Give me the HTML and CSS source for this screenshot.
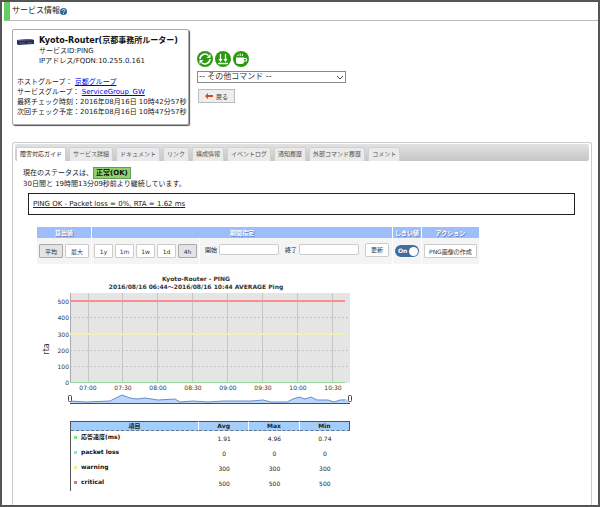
FILE: index.html
```
<!DOCTYPE html>
<html lang="ja">
<head>
    <meta charset="UTF-8">
    <meta name="viewport" content="width=device-width, initial-scale=1.0">
    <title>サービス情報</title>
    <link rel="stylesheet" href="styles.css">
</head>
<body>
    <header class="page-header">
        <h1>サービス情報</h1>
        <svg class="help" viewBox="0 0 16 16">
            <circle cx="8" cy="8" r="8" fill="#2a6496"/>
            <path d="M5 6c0-4 6-4 6-.5C11 8 8 7.500 8 10M8 11.500v2" fill="none" stroke="#fff" stroke-width="2"/>
        </svg>
    </header>

    <section class="top">
        <div class="card">
            <div class="host">
                <svg class="router" viewBox="0 0 17 8">
                    <path d="M0 2l13-1 4 1v4l-16 1-1-1z" fill="#2b2d52"/>
                    <path d="M0 2l13-1 4 1-16 1z" fill="#62658a"/>
                    <path d="M2 5h6M10 5h5" stroke="#565a8c" stroke-width="1"/>
                </svg>
                <div>
                    <h2>Kyoto-Router(京都事務所ルーター)</h2>
                    <p>サービスID:PING</p>
                    <p>IPアドレス/FQDN:10.255.0.161</p>
                </div>
            </div>
            <p>ホストグループ： <a href="#">京都グループ</a></p>
            <p>サービスグループ： <a href="#">ServiceGroup_GW</a></p>
            <p>最終チェック時刻：2016年08月16日 10時42分57秒</p>
            <p>次回チェック予定：2016年08月16日 10時47分57秒</p>
        </div>

        <div class="commands">
            <div class="icons">
                <button type="button" class="icon-btn" aria-label="再チェック">
                    <svg viewBox="0 0 16 16">
                        <circle cx="8" cy="8" r="8" fill="#2c9a10"/>
                        <path d="M3 8a5 5 0 0 1 8.500-3.500M13 8a5 5 0 0 1-8.500 3.500" fill="none" stroke="#fff" stroke-width="1.600"/>
                        <path d="M13.500 3v4h-4zM2.500 13V9h4z" fill="#fff"/>
                    </svg>
                </button>
                <button type="button" class="icon-btn" aria-label="ダウンタイム">
                    <svg viewBox="0 0 16 16">
                        <circle cx="8" cy="8" r="8" fill="#2c9a10"/>
                        <path d="M5.500 3v7M10.500 3v7M3 12.500h10" fill="none" stroke="#fff" stroke-width="1.300"/>
                        <path d="M3.500 8h4l-2 3zM8.500 8h4l-2 3z" fill="#fff"/>
                    </svg>
                </button>
                <button type="button" class="icon-btn" aria-label="休止">
                    <svg viewBox="0 0 16 16">
                        <circle cx="8" cy="8" r="8" fill="#2c9a10"/>
                        <path d="M3 6.500h8v4q0 2.500-2.500 2.500H5.500Q3 13 3 10.500z" fill="#fff"/>
                        <path d="M11 7.500h2.500v2.500H11" fill="none" stroke="#fff" stroke-width="1"/>
                        <path d="M5 5V3.500M7.200 5V2.500M9.400 5V3" stroke="#fff" stroke-width="1"/>
                    </svg>
                </button>
            </div>
            <select class="other" aria-label="その他コマンド">
                <option>-- その他コマンド --</option>
            </select>
            <button type="button" class="back">
                <svg viewBox="0 0 8 6"><path d="M0 3l3-3v2h5v2H3v2z" fill="#d9481c"/></svg>
                戻る
            </button>
        </div>
    </section>

    <main class="panel">
        <nav class="tabs">
            <a href="#" class="tab active">障害対応ガイド</a>
            <a href="#" class="tab">サービス詳細</a>
            <a href="#" class="tab">ドキュメント</a>
            <a href="#" class="tab">リンク</a>
            <a href="#" class="tab">構成情報</a>
            <a href="#" class="tab">イベントログ</a>
            <a href="#" class="tab">通知履歴</a>
            <a href="#" class="tab">外部コマンド履歴</a>
            <a href="#" class="tab">コメント</a>
        </nav>

        <div class="status">
            <p>現在のステータスは、<strong class="ok">正常(OK)</strong></p>
            <p>30日間と 19時間13分09秒前より継続しています。</p>
        </div>
        <div class="output">PING OK - Packet loss = 0%, RTA = 1.62 ms</div>

        <div class="controls">
            <section class="control">
                <h3>算出値</h3>
                <div class="control-body">
                    <button type="button" class="btn pressed">平均</button>
                    <button type="button" class="btn">最大</button>
                </div>
            </section>
            <section class="control period">
                <h3>期間指定</h3>
                <div class="control-body">
                    <div class="ranges">
                        <button type="button" class="btn">1y</button>
                        <button type="button" class="btn">1m</button>
                        <button type="button" class="btn">1w</button>
                        <button type="button" class="btn">1d</button>
                        <button type="button" class="btn pressed">4h</button>
                    </div>
                    <div class="dates">
                        <label for="start">開始</label>
                        <input type="text" id="start">
                        <label for="end" class="end-label">終了</label>
                        <input type="text" id="end">
                        <button type="button" class="btn update">更新</button>
                    </div>
                </div>
            </section>
            <section class="control">
                <h3>しきい値</h3>
                <div class="control-body">
                    <label class="switch">
                        <input type="checkbox" checked>
                        <span>On</span>
                    </label>
                </div>
            </section>
            <section class="control">
                <h3>アクション</h3>
                <div class="control-body">
                    <button type="button" class="btn png">PNG画像の作成</button>
                </div>
            </section>
        </div>

        <svg class="chart" viewBox="0 0 320 136">
            <g class="chart-title">
                <text x="158" y="9">Kyoto-Router - PING</text>
                <text x="158" y="17">2016/08/16 06:44〜2016/08/16 10:44 AVERAGE Ping</text>
            </g>
            <text class="axis-name" transform="translate(11 77) rotate(-90)">rta</text>

            <rect x="32" y="21" width="280" height="90" fill="#e5e5e5"/>
            <path d="M50.500 21v90M84.500 21v90M119.500 21v90M154.500 21v90M189.500 21v90M224.500 21v90M259.500 21v90M294.500 21v90" stroke="#c6c6c6"/>
            <path d="M32 45.500h280M32 78.500h280M32 94.500h280" stroke="#c2c2c2" stroke-dasharray="2 2"/>
            <path d="M32.500 21v90" stroke="#aaa"/>
            <path d="M32 29h275" stroke="#f88f8f" stroke-width="2"/>
            <path d="M32 62h275" stroke="#f1f0b0" stroke-width="2"/>
            <path d="M32 110.500h275" stroke="#95dba0"/>

            <g class="y-labels">
                <text x="31" y="32">500</text>
                <text x="31" y="48">400</text>
                <text x="31" y="65">300</text>
                <text x="31" y="81">200</text>
                <text x="31" y="97">100</text>
                <text x="31" y="113">0</text>
            </g>
            <g class="x-labels">
                <text x="50" y="118">07:00</text>
                <text x="85" y="118">07:30</text>
                <text x="120" y="118">08:00</text>
                <text x="155" y="118">08:30</text>
                <text x="190" y="118">09:00</text>
                <text x="225" y="118">09:30</text>
                <text x="260" y="118">10:00</text>
                <text x="295" y="118">10:30</text>
            </g>

            <!-- range slider -->
            <path d="M32 129L48 130L72 129L84 123L92 126L99 127L107 126L120 128L137 127L142 130L155 129L170 130L185 129L213 129L225 128L233 130L249 130L255 127L261 125L267 127L273 125L279 128L290 128L296 130L302 128L308 127L312 129V132H32z" transform="translate(0 0)" fill="#bcd5fb"/>
            <path d="M32 129L48 130L72 129L84 123L92 126L99 127L107 126L120 128L137 127L142 130L155 129L170 130L185 129L213 129L225 128L233 130L249 130L255 127L261 125L267 127L273 125L279 128L290 128L296 130L302 128L307 128" fill="none" stroke="#6a8fc4"/>
            <path d="M32 131.500h280" stroke="#34557c"/>
            <rect x="30.500" y="123.500" width="3" height="6" rx="1" fill="#fff" stroke="#444"/>
            <rect x="310.500" y="123.500" width="3" height="6" rx="1" fill="#fff" stroke="#444"/>
        </svg>

        <table class="summary">
            <thead>
                <tr><th class="item">項目</th><th>Avg</th><th>Max</th><th>Min</th></tr>
            </thead>
            <tbody>
                <tr><th class="green">応答速度(ms)</th><td>1.91</td><td>4.96</td><td>0.74</td></tr>
                <tr><th class="cyan">packet loss</th><td>0</td><td>0</td><td>0</td></tr>
                <tr><th class="yellow">warning</th><td>300</td><td>300</td><td>300</td></tr>
                <tr><th class="red">critical</th><td>500</td><td>500</td><td>500</td></tr>
            </tbody>
        </table>
    </main>
</body>
</html>
```

FILE: styles.css
```
* {
    box-sizing: border-box;
}

body {
    display: flex;
    flex-direction: column;
    min-height: 100vh;
    margin: 0;
    border: 2px solid #555;
    background: #fff;
    color: #222;
    font-family: "DejaVu Sans", "Noto Sans CJK JP", sans-serif;
    font-size: 7px;
    line-height: 10px;
}

h1, h2, h3, p {
    margin: 0;
}

button, input, select {
    margin: 0;
    font-family: inherit;
    font-size: 6px;
    color: #333;
}

svg {
    display: block;
}

a {
    color: #00e;
}

.page-header {
    display: flex;
    align-items: center;
    height: 19px;
    margin-left: 2px;
    border-bottom: 1px solid #bbb;
    border-left: 6px solid #6c6;
    padding-left: 2px;
}

.page-header h1 {
    font-size: 8px;
    font-weight: normal;
}

.help {
    width: 7px;
    height: 7px;
}

/* host card and commands */
.top {
    display: flex;
    align-items: flex-start;
    gap: 8px;
    margin: 8px 10px 0;
}

.card {
    width: 177px;
    height: 96px;
    padding: 5px 4px;
    border: 1px solid #aaa;
    border-radius: 2px;
    box-shadow: 1px 1px 1px #555;
    white-space: nowrap;
}

.host {
    display: flex;
    gap: 5px;
    margin-bottom: 11px;
}

.router {
    width: 17px;
    height: 8px;
    margin-top: 3px;
}

.card h2 {
    font-size: 8px;
    line-height: 11px;
    color: #111;
}

.commands {
    padding-top: 22px;
}

.icons {
    display: flex;
    gap: 2px;
    margin-bottom: 4px;
}

.icon-btn {
    width: 16px;
    height: 16px;
    padding: 0;
    border: 0;
    background: none;
}

.other {
    display: block;
    width: 149px;
    height: 12px;
    padding: 0 1px;
    border: 1px solid #888;
    appearance: none;
    background: linear-gradient(45deg, transparent 45%, #444 45%, #444 60%, transparent 60%) right 5px center / 3px 3px no-repeat,
        linear-gradient(-45deg, transparent 45%, #444 45%, #444 60%, transparent 60%) right 2px center / 3px 3px no-repeat, #fff;
    font-size: 8px;
    line-height: 10px;
}

.back {
    display: flex;
    align-items: center;
    justify-content: center;
    gap: 3px;
    width: 37px;
    height: 14px;
    margin: 6px 0 0 1px;
    padding: 0;
    border: 1px solid #bbb;
    background: #eee;
}

.back svg {
    width: 8px;
    height: 6px;
}

/* tab panel */
.panel {
    flex: 1;
    margin: 17px 6px 0 10px;
    padding: 1px 2px 10px;
    border: 1px solid #ccc;
    border-bottom: 0;
    border-radius: 3px 3px 0 0;
}

.tabs {
    display: flex;
    align-items: flex-end;
    gap: 3px;
    height: 17px;
    padding-left: 1px;
    border-radius: 2px;
    background: linear-gradient(#e2e2e2, #c6c6c6);
}

.tab {
    height: 14px;
    padding: 0 3px;
    border: 1px solid #d0d0d0;
    border-bottom: 0;
    border-radius: 2px 2px 0 0;
    background: #eaeaea;
    color: #555;
    font-size: 6px;
    line-height: 12px;
    text-decoration: none;
    white-space: nowrap;
}

.tab.active {
    background: #fff;
    color: #222;
}

.status {
    margin: 6px 8px 4px;
}

.status p {
    display: flex;
    align-items: center;
}

.ok {
    height: 12px;
    padding: 0 2px;
    border: 1px solid #6a9a58;
    background: #8fd16f;
    color: #111;
}

.output {
    height: 22px;
    margin: 0 14px 12px 13px;
    padding: 5px 4px;
    border: 1px solid #222;
    text-decoration: underline;
}

/* graph controls */
.controls {
    display: flex;
    gap: 1px;
    margin-left: 22px;
}

.control {
    background: #f4f4f4;
}

.control h3 {
    height: 11px;
    padding: 0 2px;
    background: #9dbdfb;
    color: #fff;
    font-size: 6px;
    line-height: 11px;
    text-align: center;
    text-shadow: 1px 1px 0 #6682b4;
}

.control-body {
    display: flex;
    align-items: center;
    gap: 2px;
    height: 26px;
    padding: 0 2px;
}

.btn {
    min-width: 18px;
    height: 14px;
    padding: 0 4px;
    border: 1px solid #ccc;
    border-radius: 1px;
    background: #fff;
    white-space: nowrap;
}

.btn.pressed {
    border-color: #aaa;
    background: #e4e4e4;
}

.control:first-child .btn {
    width: 24px;
    padding: 0;
}

.period {
    width: 300px;
}

.period .control-body {
    gap: 0;
    padding: 0;
}

.ranges, .dates {
    display: flex;
    align-items: center;
    height: 26px;
}

.ranges {
    gap: 2px;
    width: 108px;
    padding-left: 2px;
    border-right: 1px solid #fff;
}

.ranges .btn {
    width: 19px;
    padding: 0;
}

.dates {
    padding: 0 0 3px 5px;
    font-size: 6px;
    gap: 2px;
}

.dates input {
    width: 60px;
    height: 11px;
    border: 1px solid #ccc;
    border-radius: 2px;
}

.end-label {
    margin-left: 4px;
}

.update {
    width: 24px;
    margin-left: 4px;
    padding: 0;
    border-radius: 2px;
}

.switch {
    display: block;
}

.switch input {
    position: absolute;
    opacity: 0;
}

.switch span {
    display: flex;
    align-items: center;
    justify-content: space-between;
    width: 24px;
    height: 12px;
    padding: 0 1px 0 3px;
    border-radius: 6px;
    background: #416c9f;
    color: #fff;
    font-size: 6px;
    font-weight: bold;
}

.switch span::after {
    content: "";
    width: 9px;
    height: 9px;
    border-radius: 50%;
    background: #fff;
}

/* chart */
.chart {
    width: 320px;
    height: 136px;
    margin: 8px 0 0 23px;
    fill: #333;
    font-size: 6px;
}

.chart-title {
    font-weight: bold;
    text-anchor: middle;
}

.axis-name {
    font-size: 8px;
    text-anchor: middle;
}

.y-labels {
    text-anchor: end;
}

.x-labels {
    text-anchor: middle;
}

.summary {
    width: 280px;
    margin: 13px 0 0 55px;
    border-left: 1px solid #555;
    border-spacing: 0;
    table-layout: fixed;
    font-size: 6px;
}

.summary th, .summary td {
    height: 15px;
    padding: 0;
    text-align: center;
}

.summary thead th {
    height: 10px;
    border-top: 1px solid #456;
    border-bottom: 1px dashed #678;
    border-right: 1px solid #fff;
    background: #a3cdfa;
    line-height: 8px;
}

.summary thead th:last-child {
    border-right-color: #456;
}

.summary .item {
    width: 128px;
}

.summary tbody th {
    padding: 0 0 3px 3px;
    color: #111;
    text-align: left;
}

.summary tbody th::before {
    content: "";
    display: inline-block;
    width: 3px;
    height: 3px;
    margin-right: 4px;
    background: currentColor;
    vertical-align: middle;
}

.summary .green::before {
    color: #7be87b;
}

.summary .cyan::before {
    color: #7ee9f0;
}

.summary .yellow::before {
    color: #f0f07a;
}

.summary .red::before {
    color: #f07070;
}
```
